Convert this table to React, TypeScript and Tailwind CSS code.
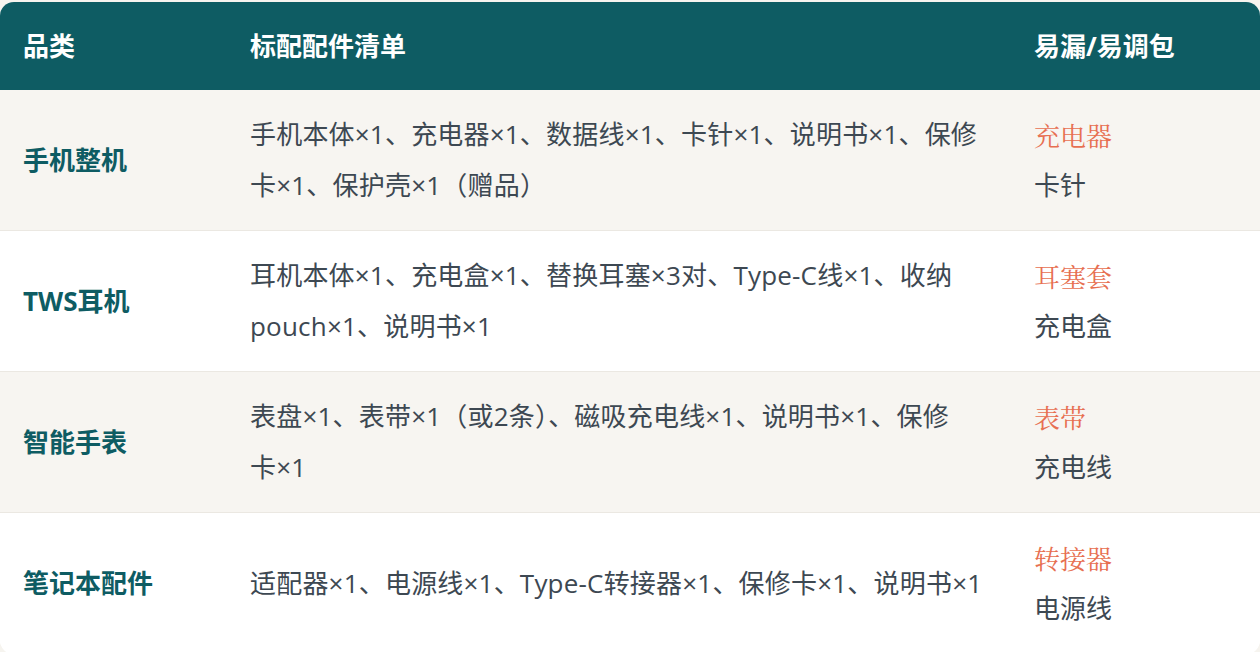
import React from "react";

const rows = [
  {
    cat: "手机整机",
    list: ["手机本体×1、充电器×1、数据线×1、卡针×1、说明书×1、保修", "卡×1", "、保护壳×1（赠品）"],
    a: "充电器",
    b: "卡针",
    bg: "bg-[#f7f5f1]",
  },
  {
    cat: "TWS耳机",
    list: ["耳机本体×1、充电盒×1、替换耳塞×3对、Type-C线×1、收纳pouch×1、说明书×1"],
    a: "耳塞套",
    b: "充电盒",
    bg: "bg-white",
  },
  {
    cat: "智能手表",
    list: ["表盘×1、表带×1（或2条）、磁吸充电线×1、说明书×1、保修", "卡×1"],
    a: "表带",
    b: "充电线",
    bg: "bg-[#f7f5f1]",
  },
  {
    cat: "笔记本配件",
    list: ["适配器×1、电源线×1、Type-C转接器×1、保修卡×1、说明书×1"],
    a: "转接器",
    b: "电源线",
    bg: "bg-white",
  },
];

export default function App() {
  return (
    <div className="w-[1260px] h-[652px] overflow-hidden bg-[#f6f4ef] pt-[2px] [font-family:'Open_Sans','Noto_Sans_CJK_SC',sans-serif]">
      <div className="rounded-[14px] overflow-hidden bg-white">
        <table className="w-full table-fixed border-collapse">
          <colgroup>
            <col className="w-[227px]" />
            <col className="w-[784px]" />
            <col className="w-[249px]" />
          </colgroup>
          <thead>
            <tr className="bg-[#0e5c63] text-white h-[88px]">
              <th className="text-left font-bold text-[26px] pl-[23px] pr-[23px] align-middle">品类</th>
              <th className="text-left font-bold text-[26px] pl-[23px] pr-[23px] align-middle">标配配件清单</th>
              <th className="text-left font-bold text-[26px] pl-[23px] pr-[23px] align-middle">易漏/易调包</th>
            </tr>
          </thead>
          <tbody>
            {rows.map((r, i) => (
              <tr key={i} className={`${r.bg} border-b border-[#ebe8e2]`}>
                <td className="pl-[23px] pr-[23px] py-[19px] align-middle text-[26px] font-bold text-[#0e5c63] leading-[51px]">
                  {r.cat}
                </td>
                <td className="pl-[23px] pr-[23px] py-[19px] align-middle text-[26px] text-[#3d4852] leading-[51px] tracking-[0.2px]">
                  {r.list.map((s, j) =>
                    j === 1 ? (
                      <span key={j} className="whitespace-nowrap">{s}</span>
                    ) : (
                      <span key={j}>{s}</span>
                    )
                  )}
                </td>
                <td className="pl-[23px] pr-[23px] py-[19px] align-middle text-[26px] leading-[51px]">
                  <div className="text-[#e76f51] [font-family:'Noto_Serif_CJK_SC','Liberation_Serif',serif]">{r.a}</div>
                  <div className="text-[#3d4852]">{r.b}</div>
                </td>
              </tr>
            ))}
          </tbody>
        </table>
      </div>
    </div>
  );
}
